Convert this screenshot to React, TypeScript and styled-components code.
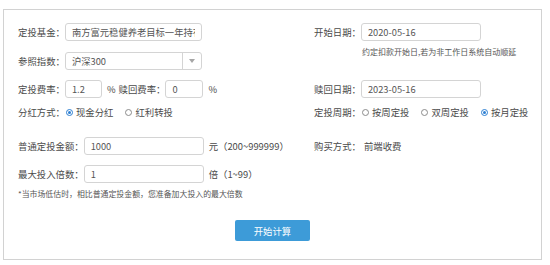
import * as React from "react";
import styled, { createGlobalStyle } from "styled-components";

const GlobalStyle = createGlobalStyle`
  body {
    margin: 0;
    background: #fff;
    font-family: "Noto Sans CJK SC", "Noto Sans", sans-serif;
    color: #4a4a4a;
  }
`;

const App = () => {
  return (
    <>
      <GlobalStyle />
      <Panel>
        <FormGrid>
          <Field>
            <Label>定投基金：</Label>
            <Input width={137} value="南方富元稳健养老目标一年持有" />
          </Field>
          <Field>
            <Label>开始日期：</Label>
            <Input width={120} value="2020-05-16" />
          </Field>

          <Field>
            <Label>参照指数：</Label>
            <Select>
              <span>沪深300</span>
              <Caret />
            </Select>
          </Field>
          <Hint>约定扣款开始日,若为非工作日系统自动顺延</Hint>

          <Field>
            <Label>定投费率：</Label>
            <Input width={37} value="1.2" />
            <Unit>%</Unit>
            <Label>赎回费率：</Label>
            <Input width={38} value="0" />
            <Unit>%</Unit>
          </Field>
          <Field>
            <Label>赎回日期：</Label>
            <Input width={120} value="2023-05-16" />
          </Field>

          <Field>
            <Label>分红方式：</Label>
            <Radio checked>现金分红</Radio>
            <Radio>红利转投</Radio>
          </Field>
          <Field>
            <Label>定投周期：</Label>
            <Radio>按周定投</Radio>
            <Radio>双周定投</Radio>
            <Radio checked>按月定投</Radio>
          </Field>

          <Field>
            <Label>普通定投金额：</Label>
            <Input width={120} value="1000" />
            <Unit>元（200~999999）</Unit>
          </Field>
          <Field>
            <Label>购买方式：</Label>
            <Plain>前端收费</Plain>
          </Field>

          <Field>
            <Label>最大投入倍数：</Label>
            <Input width={120} value="1" />
            <Unit>倍（1~99）</Unit>
          </Field>
          <div />

          <Note>*当市场低估时，相比普通定投金额，您准备加大投入的最大倍数</Note>
        </FormGrid>
        <ButtonRow>
          <Button>开始计算</Button>
        </ButtonRow>
      </Panel>
    </>
  );
};

export default App;

const Radio = ({ checked, children }: { checked?: boolean; children: React.ReactNode }) => (
  <RadioItem>
    <RadioDot $checked={!!checked} />
    {children}
  </RadioItem>
);

const Panel = styled.div`
  box-sizing: border-box;
  margin: 9px 0 0 3px;
  width: 539px;
  height: 251px;
  border: 1px solid #d2d2d2;
`;

const FormGrid = styled.div`
  display: grid;
  grid-template-columns: 296px 1fr;
  grid-template-rows: 29px 28px 23px 34px 28px 24px auto;
  align-items: start;
  padding: 13px 0 0 14px;
`;

const Field = styled.div`
  display: flex;
  align-items: center;
  height: 18px;
  font-size: 9.4px;
  white-space: nowrap;
`;

const Label = styled.span`
  color: #4a4a4a;
`;

const Input = styled.input.attrs({ readOnly: true })<{ width: number }>`
  box-sizing: border-box;
  width: ${(p) => p.width}px;
  height: 18px;
  margin: 0;
  padding: 0 6px;
  border: 1px solid #d4d4d4;
  border-radius: 3px;
  font-family: inherit;
  font-size: 9.3px;
  color: #555;
  outline: 0;
  background: #fff;
`;

const Select = styled.div`
  box-sizing: border-box;
  display: flex;
  align-items: center;
  width: 137px;
  height: 18px;
  border: 1px solid #d4d4d4;
  border-radius: 3px;
  font-size: 9.3px;
  color: #555;
  span {
    flex: 1;
    padding-left: 6px;
  }
`;

const Caret = styled.i`
  width: 18px;
  height: 100%;
  border-left: 1px solid #d4d4d4;
  display: flex;
  align-items: center;
  justify-content: center;
  &::after {
    content: "";
    border-left: 3.5px solid transparent;
    border-right: 3.5px solid transparent;
    border-top: 4px solid #a6a6a6;
  }
`;

const Unit = styled.span`
  margin: 0 3px 0 5px;
  color: #4a4a4a;
`;

const Plain = styled.span`
  margin-left: 3px;
  color: #4a4a4a;
`;

const RadioItem = styled.label`
  display: inline-flex;
  align-items: center;
  margin: 0 11px 0 1px;
  color: #4a4a4a;
`;

const RadioDot = styled.span<{ $checked: boolean }>`
  box-sizing: border-box;
  width: 7px;
  height: 7px;
  margin-right: 3px;
  border-radius: 50%;
  border: 1px solid ${(p) => (p.$checked ? "#2d7fd2" : "#8c8c8c")};
  display: flex;
  align-items: center;
  justify-content: center;
  &::after {
    content: "";
    display: ${(p) => (p.$checked ? "block" : "none")};
    width: 3px;
    height: 3px;
    border-radius: 50%;
    background: #2d7fd2;
  }
`;

const Hint = styled.div`
  margin-top: -5px;
  padding-left: 48px;
  font-size: 8px;
  line-height: 10px;
  color: #555;
  white-space: nowrap;
`;

const Note = styled.div`
  grid-column: 1 / span 2;
  font-size: 7.9px;
  line-height: 10px;
  color: #555;
  white-space: nowrap;
`;

const ButtonRow = styled.div`
  display: flex;
  justify-content: center;
  margin-top: 21px;
`;

const Button = styled.button`
  width: 75px;
  height: 21px;
  padding: 0;
  border: 0;
  border-radius: 2px;
  background: #3d9bd8;
  color: #fff;
  font-family: inherit;
  font-size: 9.4px;
`;
